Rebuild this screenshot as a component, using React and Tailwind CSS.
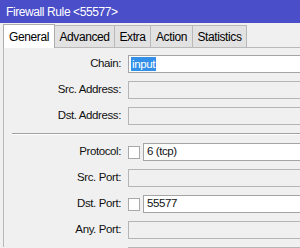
import React from "react";

const Row = ({ label, value, checkbox, disabled, selected }) => {
  return (
    <div className="flex items-center h-[18px]">
      <div className="w-[118px] shrink-0 text-right pr-[1px] text-[#111]">{label}</div>
      <div className="flex flex-1 items-center gap-[3px] pl-[6px] h-full">
        {checkbox && (
          <div className="w-[12px] h-[13px] shrink-0 bg-white border border-[#a9a9a9]" />
        )}
        <div
          className={`flex-1 h-full flex items-center pl-[2px] border border-r-0 ${
            disabled ? "bg-[#f0f0f0] border-[#b5b5b5]" : "bg-white border-[#a5a5a5]"
          }`}
        >
          {selected ? (
            <span className="bg-[#3390e8] text-white px-[1px] leading-[14px]">{value}</span>
          ) : (
            <span className="text-[#111] pl-[1px]">{value}</span>
          )}
        </div>
      </div>
    </div>
  );
};

const tabs = [
  { name: "General", w: "w-[52px]" },
  { name: "Advanced", w: "w-[60px]" },
  { name: "Extra", w: "w-[36px]" },
  { name: "Action", w: "w-[42px]" },
  { name: "Statistics", w: "w-[54px]" },
];

export default function App() {
  return (
    <div className="w-[300px] h-[248px] overflow-hidden bg-[#f0f0f0] text-[11.5px] tracking-[-0.4px] font-['Liberation_Sans',Arial,sans-serif]">
      {/* Title */}
      <div className="h-[23px] bg-[#4a4ec9] text-white text-[12px] flex items-center pl-[6px]">
        Firewall Rule &lt;55577&gt;
      </div>

      {/* Tabs */}
      <div className="flex items-end h-[24px] pl-[3px]">
        {tabs.map((t, i) =>
          i === 0 ? (
            <div
              key={t.name}
              className={`${t.w} h-[24px] bg-white border border-b-0 border-[#adadad] flex items-center justify-center text-[12px] relative top-[1px]`}
            >
              {t.name}
            </div>
          ) : (
            <div
              key={t.name}
              className={`${t.w} h-[22px] bg-[#e2e2e2] border border-l-0 border-b-0 border-[#b9b9b9] flex items-center justify-center text-[12px]`}
            >
              {t.name}
            </div>
          )
        )}
      </div>

      {/* Panel */}
      <div className="ml-[3px] w-[330px] h-[200px] border-l border-t border-[#b9b9b9] bg-[#f0f0f0] pt-[7px]">
        <div className="flex flex-col gap-[8px]">
          <Row label="Chain:" value="input" selected />
          <Row label="Src. Address:" disabled />
          <Row label="Dst. Address:" disabled />
        </div>

        <div className="ml-[8px] mt-[8px] mb-[8px] border-t border-[#a0a0a0] border-b border-b-white" />

        <div className="flex flex-col gap-[8px]">
          <Row label="Protocol:" value="6 (tcp)" checkbox />
          <Row label="Src. Port:" disabled />
          <Row label="Dst. Port:" value="55577" checkbox />
          <Row label="Any. Port:" disabled />
          <Row label="" disabled />
        </div>
      </div>
    </div>
  );
}
